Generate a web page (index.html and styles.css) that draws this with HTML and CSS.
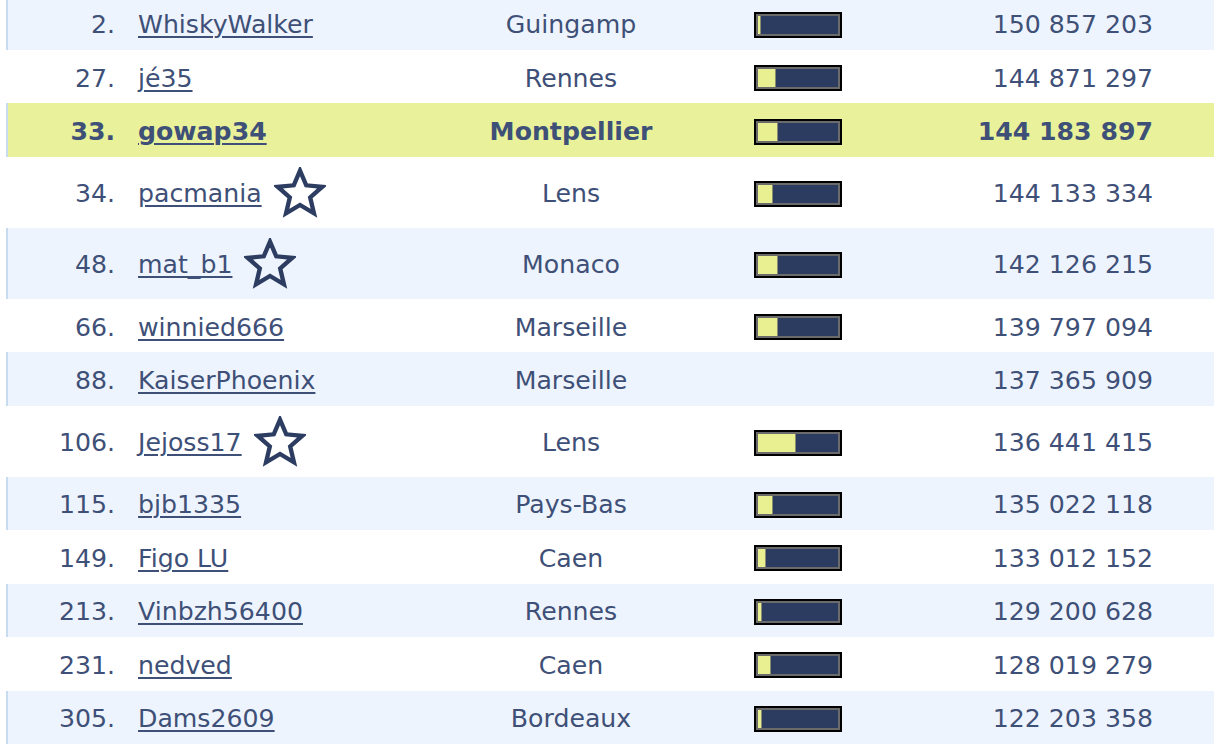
FILE: index.html
```html
<!DOCTYPE html>
<html lang="fr">
<head>
<meta charset="utf-8">
<title>Classement</title>
<link rel="stylesheet" href="styles.css">
</head>
<body>
<svg width="0" height="0" class="defs">
  <defs>
    <symbol id="star" viewBox="0 0 50 50">
      <polygon points="25,3.5 31,17.6 46.5,19 34.8,29.3 38.4,44.5 25,36.5 11.6,44.5 15.2,29.3 3.5,19 19,17.6" fill="none" stroke="#2d3d62" stroke-width="4.2" stroke-linejoin="miter"/>
    </symbol>
  </defs>
</svg>
<div class="ranking">
  <div class="row alt">
    <div class="rank">2.</div>
    <div class="name"><a href="#">WhiskyWalker</a></div>
    <div class="city">Guingamp</div>
    <div class="gauge"><div class="bar"><div class="track"><div class="fill" style="width:2px"></div></div></div></div>
    <div class="score">150 857 203</div>
  </div>
  <div class="row">
    <div class="rank">27.</div>
    <div class="name"><a href="#">jé35</a></div>
    <div class="city">Rennes</div>
    <div class="gauge"><div class="bar"><div class="track"><div class="fill" style="width:17px"></div></div></div></div>
    <div class="score">144 871 297</div>
  </div>
  <div class="row me">
    <div class="rank">33.</div>
    <div class="name"><a href="#">gowap34</a></div>
    <div class="city">Montpellier</div>
    <div class="gauge"><div class="bar"><div class="track"><div class="fill" style="width:19px"></div></div></div></div>
    <div class="score">144 183 897</div>
  </div>
  <div class="row tall">
    <div class="rank">34.</div>
    <div class="name"><a href="#">pacmania</a><svg class="star"><use href="#star"/></svg></div>
    <div class="city">Lens</div>
    <div class="gauge"><div class="bar"><div class="track"><div class="fill" style="width:14px"></div></div></div></div>
    <div class="score">144 133 334</div>
  </div>
  <div class="row alt tall">
    <div class="rank">48.</div>
    <div class="name"><a href="#">mat_b1</a><svg class="star"><use href="#star"/></svg></div>
    <div class="city">Monaco</div>
    <div class="gauge"><div class="bar"><div class="track"><div class="fill" style="width:19px"></div></div></div></div>
    <div class="score">142 126 215</div>
  </div>
  <div class="row">
    <div class="rank">66.</div>
    <div class="name"><a href="#">winnied666</a></div>
    <div class="city">Marseille</div>
    <div class="gauge"><div class="bar"><div class="track"><div class="fill" style="width:19px"></div></div></div></div>
    <div class="score">139 797 094</div>
  </div>
  <div class="row alt">
    <div class="rank">88.</div>
    <div class="name"><a href="#">KaiserPhoenix</a></div>
    <div class="city">Marseille</div>
    <div class="gauge"></div>
    <div class="score">137 365 909</div>
  </div>
  <div class="row tall">
    <div class="rank">106.</div>
    <div class="name"><a href="#">Jejoss17</a><svg class="star"><use href="#star"/></svg></div>
    <div class="city">Lens</div>
    <div class="gauge"><div class="bar"><div class="track"><div class="fill" style="width:37px"></div></div></div></div>
    <div class="score">136 441 415</div>
  </div>
  <div class="row alt">
    <div class="rank">115.</div>
    <div class="name"><a href="#">bjb1335</a></div>
    <div class="city">Pays-Bas</div>
    <div class="gauge"><div class="bar"><div class="track"><div class="fill" style="width:14px"></div></div></div></div>
    <div class="score">135 022 118</div>
  </div>
  <div class="row">
    <div class="rank">149.</div>
    <div class="name"><a href="#">Figo LU</a></div>
    <div class="city">Caen</div>
    <div class="gauge"><div class="bar"><div class="track"><div class="fill" style="width:7px"></div></div></div></div>
    <div class="score">133 012 152</div>
  </div>
  <div class="row alt">
    <div class="rank">213.</div>
    <div class="name"><a href="#">Vinbzh56400</a></div>
    <div class="city">Rennes</div>
    <div class="gauge"><div class="bar"><div class="track"><div class="fill" style="width:3px"></div></div></div></div>
    <div class="score">129 200 628</div>
  </div>
  <div class="row">
    <div class="rank">231.</div>
    <div class="name"><a href="#">nedved</a></div>
    <div class="city">Caen</div>
    <div class="gauge"><div class="bar"><div class="track"><div class="fill" style="width:12px"></div></div></div></div>
    <div class="score">128 019 279</div>
  </div>
  <div class="row alt">
    <div class="rank">305.</div>
    <div class="name"><a href="#">Dams2609</a></div>
    <div class="city">Bordeaux</div>
    <div class="gauge"><div class="bar"><div class="track"><div class="fill" style="width:3px"></div></div></div></div>
    <div class="score">122 203 358</div>
  </div>
</div>
</body>
</html>
```

FILE: styles.css
```css
html, body {
  margin: 0;
  padding: 0;
  background: #ffffff;
}

body {
  font-family: "DejaVu Sans", Verdana, sans-serif;
  font-size: 25.2px;
  color: #3e5077;
  overflow: hidden;
}

.defs {
  position: absolute;
  width: 0;
  height: 0;
}

.ranking {
  margin-top: -3.44px;
  margin-left: 6px;
}

.row {
  display: grid;
  grid-template-columns: 110px 343px 220px 235px 1fr;
  align-items: center;
  box-sizing: border-box;
  height: 53.44px;
  padding-top: 3px;
  border-left: 2px solid transparent;
  background: #ffffff;
}

.row.alt {
  background: #eef4fd;
  border-left-color: #c9dbef;
}

.row.me {
  background: #e9f29a;
  border-left-color: #c9dbef;
  font-weight: bold;
}

.row.tall {
  height: 71px;
}

.rank {
  text-align: right;
  padding-right: 3px;
}

.name {
  padding-left: 20px;
  display: flex;
  align-items: center;
}

.name a {
  color: inherit;
  text-decoration: underline;
  text-decoration-thickness: 1.5px;
  text-underline-offset: 3px;
}

.star {
  width: 52px;
  height: 52px;
  margin-left: 12px;
  margin-top: -2px;
  filter: blur(0.55px);
}

.city {
  text-align: center;
}

.gauge {
  padding-left: 73px;
  display: flex;
  align-items: center;
}

.bar {
  width: 84px;
  height: 22px;
  border: 2px solid #000000;
  background: #000000;
}

.track {
  height: 18px;
  border: 2px solid #6b6b6b;
  background: #2c3c60;
  display: flex;
}

.fill {
  height: 100%;
  background: #e8f092;
  box-shadow: 1px 0 0 #8a8c70;
}

.score {
  text-align: right;
  padding-right: 61px;
}
```
